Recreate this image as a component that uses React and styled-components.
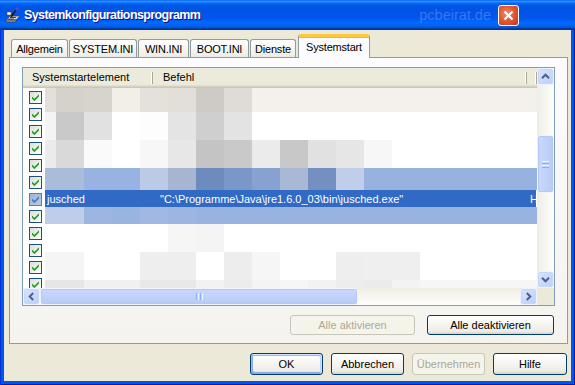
import React from "react";
import styled, { createGlobalStyle, css } from "styled-components";

const GlobalStyle = createGlobalStyle`
  html, body { margin: 0; padding: 0; background: #fff; }
  body { font-family: "Liberation Sans", Arial, sans-serif; font-size: 11px; }
  * { box-sizing: border-box; }
`;

const Window = styled.div`
  width: 575px;
  height: 385px;
  display: flex;
  flex-direction: column;
  background: #0055ea;
  box-shadow: inset 1px 0 #0831d9, inset -1px 0 #001ea0, inset 0 -1px #001ea0;
  overflow: hidden;
`;

const TitleBar = styled.div`
  height: 30px;
  flex: none;
  display: flex;
  align-items: center;
  padding: 0 0 0 5px;
  background: linear-gradient(
    180deg,
    #0058ee 0%,
    #3593ff 4%,
    #288eff 6%,
    #127dff 8%,
    #036ffc 10%,
    #0262ee 14%,
    #0057e5 20%,
    #0054e3 24%,
    #0055eb 56%,
    #005bf5 66%,
    #026afe 76%,
    #0062ef 86%,
    #0052d6 92%,
    #0040ab 94%,
    #003092 100%
  );
`;

const TitleText = styled.span`
  margin-left: 3px;
  color: #fff;
  font-weight: bold;
  font-size: 12.5px;
  letter-spacing: -0.6px;
  text-shadow: 1px 1px #0f1089;
  flex: 1;
`;

const Watermark = styled.span`
  font-size: 14.5px;
  color: rgba(255, 255, 255, 0.22);
  margin-right: 7px;
`;

const CloseButton = styled.div`
  width: 21px;
  height: 21px;
  margin-right: 56px;
  border: 1px solid #fff;
  border-radius: 3px;
  background: radial-gradient(circle at 40% 40%, #f0916f 0%, #e35935 45%, #c63618 100%);
  display: flex;
  align-items: center;
  justify-content: center;
`;

const Body = styled.div`
  flex: 1;
  margin: 0 4px 4px;
  background: #ece9d8;
  display: flex;
  flex-direction: column;
  padding: 4px 3px 0 5px;
`;

const TabStrip = styled.div`
  height: 23px;
  display: flex;
  align-items: flex-end;
  padding-left: 2px;
  gap: 1px;
`;

const Tab = styled.div`
  width: ${(p) => p.$w}px;
  height: 18px;
  display: flex;
  align-items: center;
  justify-content: center;
  border: 1px solid #919b9c;
  border-bottom: none;
  border-radius: 3px 3px 0 0;
  background: linear-gradient(180deg, #ffffff, #f3f2ec 70%, #ecebe6);
  color: #000;
  white-space: nowrap;
  letter-spacing: -0.2px;
  ${(p) =>
    p.$active &&
    css`
      height: 24px;
      margin: 0 0 -1px 1px;
      padding-bottom: 2px;
      background: #fcfcfe;
      border-top: 3px solid #ffc83c;
      box-shadow: inset 0 1px #f8b237;
      position: relative;
      z-index: 1;
    `}
`;

const Panel = styled.div`
  height: 287px;
  border: 1px solid #919b9c;
  background: linear-gradient(180deg, #fcfcfe, #f4f3ee);
  padding: 9px 12px 0 12px;
  display: flex;
  flex-direction: column;
`;

const ListView = styled.div`
  height: 239px;
  border: 1px solid #7f9db9;
  background: #fff;
  display: grid;
  grid-template-columns: 1fr 17px;
  grid-template-rows: 1fr 17px;
`;

const ListMain = styled.div`
  display: flex;
  flex-direction: column;
  overflow: hidden;
`;

const Header = styled.div`
  height: 20px;
  flex: none;
  display: grid;
  grid-template-columns: 130px 374px 1fr;
  background: #ebeadb;
  box-shadow: inset 0 -1px #cbc7b8, inset 0 -2px #d6d2c2, inset 0 -3px #e2decd;
`;

const HeaderCell = styled.div`
  padding-left: ${(p) => p.$pad}px;
  padding-bottom: 2px;
  display: flex;
  align-items: center;
  background: linear-gradient(#aca899, #aca899) right 0 top 4px / 1px 12px no-repeat,
    linear-gradient(#fff, #fff) right 1px top 4px / 1px 12px no-repeat;
  color: #000;
`;

const ListBody = styled.div`
  flex: 1;
  display: grid;
  grid-template-columns: 22px 1fr;
  overflow: hidden;
`;

const CheckColumn = styled.div`
  display: flex;
  flex-direction: column;
`;

const CheckCell = styled.div`
  height: 17px;
  flex: none;
  padding: 3px 0 0 6px;
`;

const CheckBox = styled.div`
  width: 13px;
  height: 13px;
  border: 1px solid ${(p) => (p.$selected ? "#5d7fa8" : "#1c5180")};
  background: ${(p) =>
    p.$selected ? "linear-gradient(135deg, #9fb3d2, #b9c9e0)" : "linear-gradient(135deg, #dcdcd7, #ffffff)"};
  display: flex;
  align-items: center;
  justify-content: center;
`;

const ContentColumn = styled.div`
  display: flex;
  flex-direction: column;
`;

const MosaicBand = styled.div`
  height: ${(p) => p.$h}px;
  flex: none;
  display: grid;
  grid-template-columns: 11px repeat(17, 28px) 1fr;
  background: ${(p) => p.$base};
`;

const MosaicCell = styled.div`
  background: ${(p) => p.$c};
`;

const SelectedRow = styled.div`
  height: 17px;
  flex: none;
  display: grid;
  grid-template-columns: 110px 372px 1fr;
  background: #316ac5;
  color: #fff;
  margin-right: 1px;
  white-space: nowrap;
  overflow: hidden;
`;

const RowCell = styled.div`
  padding-left: ${(p) => p.$pad}px;
  display: flex;
  align-items: center;
  overflow: hidden;
`;

const VScroll = styled.div`
  display: flex;
  flex-direction: column;
  background: linear-gradient(90deg, #eeede5, #fefefb);
`;

const HScroll = styled.div`
  display: flex;
  background: linear-gradient(180deg, #eeede5, #fefefb);
`;

const ScrollButton = styled.div`
  width: 17px;
  height: 17px;
  flex: none;
  border: 1px solid #eef3fd;
  border-radius: 3px;
  background: linear-gradient(135deg, #d9e4fd, #bccff8);
  box-shadow: inset 0 0 0 1px #c5d5fb;
  display: flex;
  align-items: center;
  justify-content: center;
`;

const Track = styled.div`
  flex: 1;
  display: flex;
  flex-direction: ${(p) => (p.$vertical ? "column" : "row")};
`;

const Thumb = styled.div`
  flex: none;
  ${(p) =>
    p.$vertical
      ? css`
          width: 17px;
          height: 58px;
          margin-top: 50px;
          background: linear-gradient(90deg, #cad8fc, #b8cbf6);
        `
      : css`
          height: 17px;
          width: 318px;
          background: linear-gradient(180deg, #cad8fc, #b8cbf6);
        `}
  border: 1px solid #eef3fd;
  border-radius: 3px;
  box-shadow: inset 0 0 0 1px #b3c8f5;
  display: flex;
  align-items: center;
  justify-content: center;
`;

const Corner = styled.div`
  background: #ece9d8;
`;

const ButtonRow = styled.div`
  display: flex;
  justify-content: flex-end;
  gap: ${(p) => p.$gap}px;
  margin-top: 9px;
  padding-right: ${(p) => p.$right}px;
`;

const Button = styled.button`
  font: 11px "Liberation Sans", Arial, sans-serif;
  width: ${(p) => p.$w}px;
  height: ${(p) => p.$h}px;
  padding: 0;
  color: #000;
  border: 1px solid #003c74;
  border-radius: 3px;
  background: linear-gradient(180deg, #ffffff 0%, #f4f3ee 55%, #ecebe6 86%, #d6d0c5 100%);
  ${(p) =>
    p.$default &&
    css`
      box-shadow: inset -1px 1px #cee7ff, inset 1px 2px #98b8ea, inset -2px 2px #bcd4f6,
        inset 1px -1px #89ade4, inset 2px -2px #89ade4;
    `}
  &:disabled {
    border-color: #c9c7ba;
    background: #f5f4ea;
    color: #aca899;
    box-shadow: none;
  }
`;

const TOP_BANDS = [
  {
    h: 24,
    base: "#f3f1ea",
    cells: ["#e2e0d8", "#d4d2cb", "#d6d4cd", "#f1efe7", "#e3e1da", "#e1dfd8", "#cdcbc4", "#dedcd4"],
  },
  {
    h: 28,
    base: "#ffffff",
    cells: ["#f4f4f4", "#c9c9c9", "#e1e1e1", "#ffffff", "#fdfdfd", "#e4e4e4", "#cfcfcf", "#e3e3e3"],
  },
  {
    h: 28,
    base: "#ffffff",
    cells: [
      "#ebebeb", "#d9d9d9", "#fafafa", "#ffffff", "#f7f7f7", "#e7e7e7", "#c4c4c4",
      "#c9c9c9", "#ebebeb", "#c8c8c8", "#e1e1e1", "#e6e6e6", "#f7f7f7",
    ],
  },
  {
    h: 22,
    base: "#98b2e0",
    cells: [
      "#a9bcda", "#a9bcda", "#98b3e1", "#98b3e1", "#bccbe5", "#a7b5d0", "#6e8bbd",
      "#7997c9", "#87a1d1", "#a9b9d5", "#7390c0", "#c0ceea", "#98b2e0",
    ],
  },
];

const BOTTOM_BANDS = [
  { h: 17, base: "#99b3e0", cells: ["#c0cdea", "#c0cdea", "#9cb5e1", "#9ab4e0", "#a0b8e2", "#9cb5e1"] },
  { h: 28, base: "#ffffff", cells: ["#ffffff", "#ffffff", "#ffffff", "#ffffff", "#ffffff", "#f6f6f6", "#f4f4f4"] },
  {
    h: 28,
    base: "#ffffff",
    cells: [
      "#f5f5f5", "#f5f5f5", "#ffffff", "#ffffff", "#eeeeee", "#eeeeee", "#ffffff",
      "#ededed", "#f6f6f6", "#ffffff", "#ffffff", "#eeeeee", "#efefef", "#efefef",
    ],
  },
  {
    h: 12,
    base: "#f6f6f6",
    cells: [
      "#e6e6e6", "#e6e6e6", "#f0f0f0", "#f0f0f0", "#e8e8e8", "#e8e8e8", "#f2f2f2",
      "#ececec", "#f4f4f4", "#f6f6f6", "#f2f2f2", "#ededed", "#ebebeb", "#f3f3f3",
    ],
  },
];

const Band = ({ band }) => (
  <MosaicBand $h={band.h} $base={band.base}>
    {Array.from({ length: 19 }, (_, i) => (
      <MosaicCell key={i} $c={band.cells[i] || band.base} />
    ))}
  </MosaicBand>
);

const CheckMark = ({ color }) => (
  <svg width="7" height="7" viewBox="0 0 7 7">
    <path d="M0 2.4 L2.4 4.8 L7 0.2 L7 2.6 L2.4 7.2 L0 4.8 Z" fill={color} />
  </svg>
);

const Arrow = ({ dir }) => {
  const rot = { up: 0, down: 180, left: 270, right: 90 }[dir];
  return (
    <svg width="9" height="9" viewBox="0 0 9 9" style={{ transform: `rotate(${rot}deg)` }}>
      <path d="M1 6.2 L4.5 2.7 L8 6.2" fill="none" stroke="#4d6185" strokeWidth="2" />
    </svg>
  );
};

const Grip = ({ vertical }) => (
  <svg width="7" height="7" viewBox="0 0 7 7" style={{ transform: vertical ? "none" : "rotate(90deg)" }}>
    {[0, 2, 4, 6].map((y) => (
      <line key={y} x1="0" x2="7" y1={y + 0.5} y2={y + 0.5} stroke={y % 4 === 0 ? "#eef4fe" : "#8cb0f8"} />
    ))}
  </svg>
);

const AppIcon = () => (
  <svg width="16" height="16" viewBox="0 0 16 16">
    <path d="M1 13 L5 9 L15 9 L11 13 Z" fill="#d8d8d8" stroke="#444" strokeWidth="0.8" />
    <path d="M1 13 L11 13 L11 15 L1 15 Z" fill="#9a9a9a" stroke="#333" strokeWidth="0.6" />
    <path d="M3 12 L9 12 M5 10.5 L11 10.5" stroke="#222" strokeWidth="0.8" />
    <path d="M6 10 L11 3" stroke="#111" strokeWidth="1.4" />
    <path d="M11 3 L13 0.5" stroke="#7a3fd0" strokeWidth="2" />
    <rect x="2" y="5" width="4" height="3" fill="#fff" stroke="#555" strokeWidth="0.6" />
  </svg>
);

const TABS = [
  { label: "Allgemein", w: 57 },
  { label: "SYSTEM.INI", w: 68 },
  { label: "WIN.INI", w: 51 },
  { label: "BOOT.INI", w: 59 },
  { label: "Dienste", w: 46 },
  { label: "Systemstart", w: 72, active: true },
];

export default function App() {
  return (
    <>
      <GlobalStyle />
      <Window>
        <TitleBar>
          <AppIcon />
          <TitleText>Systemkonfigurationsprogramm</TitleText>
          <Watermark>pcbeirat.de</Watermark>
          <CloseButton>
            <svg width="11" height="11" viewBox="0 0 11 11">
              <path d="M1.5 1.5 L9.5 9.5 M9.5 1.5 L1.5 9.5" stroke="#fff" strokeWidth="2" />
            </svg>
          </CloseButton>
        </TitleBar>
        <Body>
          <TabStrip>
            {TABS.map((t) => (
              <Tab key={t.label} $w={t.w} $active={t.active}>
                {t.label}
              </Tab>
            ))}
          </TabStrip>
          <Panel>
            <ListView>
              <ListMain>
                <Header>
                  <HeaderCell $pad={9}>Systemstartelement</HeaderCell>
                  <HeaderCell $pad={10}>Befehl</HeaderCell>
                  <HeaderCell $pad={0} />
                </Header>
                <ListBody>
                  <CheckColumn>
                    {Array.from({ length: 12 }, (_, i) => (
                      <CheckCell key={i}>
                        <CheckBox $selected={i === 6}>
                          <CheckMark color={i === 6 ? "#3f7fbf" : "#21a121"} />
                        </CheckBox>
                      </CheckCell>
                    ))}
                  </CheckColumn>
                  <ContentColumn>
                    {TOP_BANDS.map((b, i) => (
                      <Band key={i} band={b} />
                    ))}
                    <SelectedRow>
                      <RowCell $pad={2}>jusched</RowCell>
                      <RowCell $pad={5}>"C:\Programme\Java\jre1.6.0_03\bin\jusched.exe"</RowCell>
                      <RowCell $pad={3}>H</RowCell>
                    </SelectedRow>
                    {BOTTOM_BANDS.map((b, i) => (
                      <Band key={i} band={b} />
                    ))}
                  </ContentColumn>
                </ListBody>
              </ListMain>
              <VScroll>
                <ScrollButton>
                  <Arrow dir="up" />
                </ScrollButton>
                <Track $vertical>
                  <Thumb $vertical>
                    <Grip vertical />
                  </Thumb>
                </Track>
                <ScrollButton>
                  <Arrow dir="down" />
                </ScrollButton>
              </VScroll>
              <HScroll>
                <ScrollButton>
                  <Arrow dir="left" />
                </ScrollButton>
                <Track>
                  <Thumb>
                    <Grip />
                  </Thumb>
                </Track>
                <ScrollButton>
                  <Arrow dir="right" />
                </ScrollButton>
              </HScroll>
              <Corner />
            </ListView>
            <ButtonRow $gap={12} $right={1}>
              <Button $w={125} $h={20} disabled>
                Alle aktivieren
              </Button>
              <Button $w={127} $h={20}>
                Alle deaktivieren
              </Button>
            </ButtonRow>
          </Panel>
          <ButtonRow $gap={8} $right={1}>
            <Button $w={73} $h={22} $default>
              OK
            </Button>
            <Button $w={73} $h={22}>
              Abbrechen
            </Button>
            <Button $w={73} $h={22} disabled>
              Übernehmen
            </Button>
            <Button $w={74} $h={22}>
              Hilfe
            </Button>
          </ButtonRow>
        </Body>
      </Window>
    </>
  );
}
